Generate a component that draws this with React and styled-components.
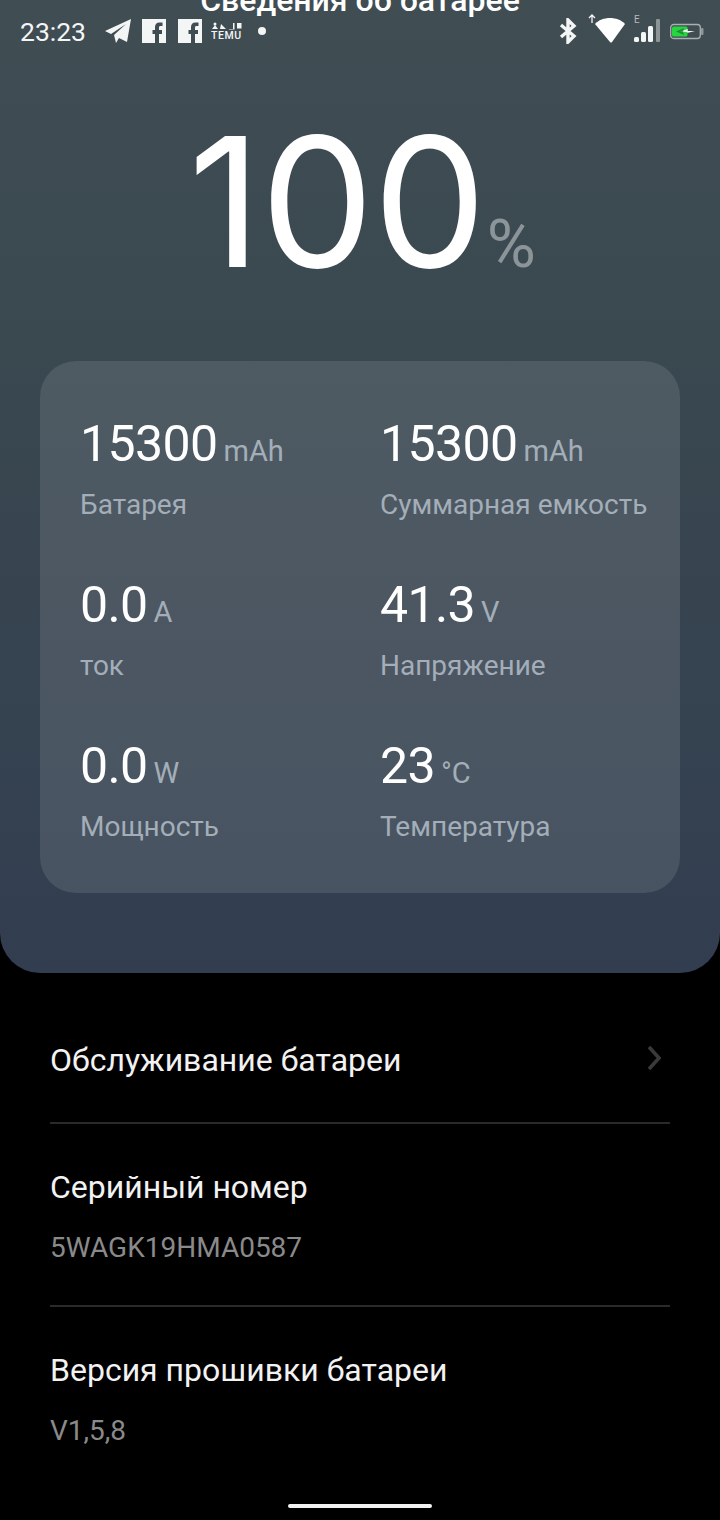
import React from 'react';
import styled, { createGlobalStyle } from 'styled-components';

const GlobalStyle = createGlobalStyle`
  html, body { margin: 0; padding: 0; background: #000; }
  body { font-family: "Roboto", "Noto Sans", sans-serif; }
`;

const Screen = styled.div`
  position: relative;
  width: 720px;
  height: 1520px;
  overflow: hidden;
  background: #000;
  color: #fff;
`;

const StatusBar = styled.div`
  position: absolute;
  top: 14px;
  left: 20px;
  right: 16px;
  height: 34px;
  display: flex;
  align-items: center;
  justify-content: space-between;
`;

const StatusGroup = styled.div`
  display: flex;
  align-items: center;
`;

const Clock = styled.span`
  font-size: 26.5px;
  color: #f4f5f5;
  margin-right: 18px;
`;

const Hero = styled.section`
  height: 973px;
  box-sizing: border-box;
  padding: 0 40px;
  border-radius: 0 0 40px 40px;
  background: linear-gradient(180deg, #404d53 0%, #3a4850 35%, #323e50 100%);
  overflow: hidden;
`;

const Header = styled.header`
  position: relative;
  height: 16px;
  text-align: center;
`;

const Title = styled.h1`
  margin: -17px 0 0;
  font-size: 32px;
  line-height: 34px;
  font-weight: 500;
`;

const Back = styled.svg`
  position: absolute;
  left: 10px;
  top: 0;
`;

const Charge = styled.div`
  display: flex;
  align-items: baseline;
  justify-content: center;
  box-sizing: border-box;
  height: 345px;
  padding-top: 92px;
  margin-bottom: 17px;
  line-height: 222px;
`;

const ChargeValue = styled.span`
  font-family: "Inter", "Roboto", sans-serif;
  font-size: 180px;
  font-weight: 430;
  letter-spacing: -1px;
  margin-left: 4px;
`;

const ChargeUnit = styled.span`
  font-size: 67px;
  margin-left: 1px;
  color: #8b9599;
`;

const Card = styled.div`
  display: grid;
  grid-template-columns: 300px 1fr;
  grid-auto-rows: 161px;
  box-sizing: border-box;
  height: 532px;
  padding: 51px 0 0 40px;
  border-radius: 36px;
  background: rgba(255, 255, 255, 0.105);
`;

const Stat = styled.div`
  display: flex;
  flex-direction: column;
  gap: 9px;
`;

const StatValue = styled.div`
  display: flex;
  align-items: baseline;
  height: 64px;
  line-height: 64px;
  font-size: 50px;
  font-weight: 450;
  letter-spacing: -0.6px;
`;

const StatUnit = styled.span`
  font-size: 29px;
  font-weight: 400;
  letter-spacing: 0;
  margin-left: 6px;
  color: #a3aeb8;
`;

const StatLabel = styled.div`
  font-size: 28px;
  line-height: 40px;
  color: #a3aeb8;
  white-space: nowrap;
`;

const List = styled.div`
  padding: 0 50px;
`;

const Row = styled.div`
  display: flex;
  align-items: ${(p) => (p.$center ? 'center' : 'flex-start')};
  justify-content: space-between;
  box-sizing: border-box;
  height: ${(p) => p.$height}px;
  padding-top: ${(p) => p.$top}px;
  border-bottom: ${(p) => (p.$last ? 'none' : '2px solid #2a2a2a')};
`;

const RowTitle = styled.div`
  font-size: 32px;
  line-height: 40px;
  color: #f2f2f2;
`;

const RowValue = styled.div`
  margin-top: 21px;
  font-size: 28px;
  line-height: 40px;
  color: #8a8a8a;
`;

const Chevron = styled.svg`
  margin-right: 9px;
  margin-top: -4px;
`;

const HomeBar = styled.div`
  position: absolute;
  left: 288px;
  bottom: 12px;
  width: 144px;
  height: 4px;
  border-radius: 2px;
  background: #f2f2f2;
`;

const stats = [
  { value: '15300', unit: 'mAh', label: 'Батарея' },
  { value: '15300', unit: 'mAh', label: 'Суммарная емкость' },
  { value: '0.0', unit: 'A', label: 'ток' },
  { value: '41.3', unit: 'V', label: 'Напряжение' },
  { value: '0.0', unit: 'W', label: 'Мощность' },
  { value: '23', unit: '°C', label: 'Температура' },
];

const Telegram = () => (
  <svg width="28" height="26" viewBox="0 0 28 26" style={{ marginRight: 10 }}>
    <path d="M1 13 L27 1 L23 24 L15 20 L12 25 L10 17 L22 6 L7 16 Z" fill="#f4f5f5" />
  </svg>
);

const Facebook = ({ gap }) => (
  <svg width="24" height="24" viewBox="0 0 24 24" style={{ marginRight: gap }}>
    <path
      fillRule="evenodd"
      d="M0 0H24V24H17V15H20V11H17V8.500C17 7.500 17.500 7 18.500 7H20.500V3.500H17.500C14.500 3.500 13 5.500 13 8V11H10.500V15H13V24H0Z"
      fill="#f4f5f5"
    />
  </svg>
);

const Temu = () => (
  <svg width="31" height="22" viewBox="0 0 31 22" style={{ marginRight: 15 }}>
    <circle cx="4" cy="4" r="1.500" fill="#f4f5f5" />
    <path d="M1 9l3-4 3 4zM10 4l5 5h-6zM18 9h4V3h1.500v6.500h-5.500zM26 3h4.500v5.500h-4.500z" fill="#f4f5f5" />
    <text x="0" y="19" fontSize="10.500" fontWeight="500" fill="#f4f5f5" fontFamily="Roboto, sans-serif" textLength="30">TEMU</text>
  </svg>
);

const Dot = () => (
  <svg width="10" height="10" viewBox="0 0 10 10">
    <circle cx="5" cy="5" r="4" fill="#f4f5f5" />
  </svg>
);

const Bluetooth = () => (
  <svg width="18" height="26" viewBox="0 0 18 26" style={{ marginRight: 10 }}>
    <path
      d="M2 7 L15 18 L9 24 V2 L15 8 L2 19"
      fill="none"
      stroke="#f4f5f5"
      strokeWidth="3.400"
    />
  </svg>
);

const Wifi = () => (
  <svg width="40" height="34" viewBox="0 0 40 34" style={{ marginRight: 6 }}>
    <path d="M2 4 L5 1 L8 4 M5 1 V9" fill="none" stroke="#f4f5f5" strokeWidth="1.300" />
    <path d="M8 10 C15 2 31 2 38 10 L25 28 Q24 29 23 28 Z" fill="#fff" />
  </svg>
);

const Signal = () => (
  <svg width="28" height="34" viewBox="0 0 28 34" style={{ marginRight: 9 }}>
    <text x="1" y="9" fontSize="10" fill="#b5babc" fontFamily="Roboto, sans-serif">E</text>
    <rect x="1" y="23" width="5" height="5" rx="1.500" fill="#f4f5f5" />
    <rect x="8" y="18" width="5" height="10" rx="1.500" fill="#f4f5f5" />
    <rect x="15" y="12" width="5" height="16" rx="1.500" fill="#f4f5f5" />
    <rect x="23" y="5" width="4" height="23" rx="1" fill="#8d9497" />
  </svg>
);

const Battery = () => (
  <svg width="34" height="18" viewBox="0 0 34 18">
    <rect x="0.700" y="2.500" width="29.600" height="14" rx="3" fill="none" stroke="#a9b0b2" strokeWidth="1.300" />
    <rect x="2" y="4.500" width="15.500" height="10" rx="1.500" fill="#25d63f" />
    <rect x="31" y="6" width="2.500" height="7" rx="1" fill="#8f9698" />
    <path d="M10 9.500 L18 7 L17.500 9 L25 9 L17 11 L17.500 10 Z" fill="#f4f5f5" />
    <path d="M6 9.500 L14 6 L13 9.500 L14 13 Z" fill="#1f5f32" opacity="0.600" />
  </svg>
);

const App = () => (
  <Screen>
    <GlobalStyle />
    <Hero>
      <Header>
        <Back width="70" height="20" viewBox="0 0 70 20">
          <path d="M7 -6 L25 13" fill="none" stroke="#f4f5f5" strokeWidth="4" strokeLinecap="round" />
        </Back>
        <Title>Сведения об батарее</Title>
      </Header>
      <Charge>
        <ChargeValue>100</ChargeValue>
        <ChargeUnit>%</ChargeUnit>
      </Charge>
      <Card>
        {stats.map(({ value, unit, label }) => (
          <Stat key={label}>
            <StatValue>
              {value}
              <StatUnit>{unit}</StatUnit>
            </StatValue>
            <StatLabel>{label}</StatLabel>
          </Stat>
        ))}
      </Card>
    </Hero>
    <List>
      <Row $center $height={151} $top={24}>
        <RowTitle>Обслуживание батареи</RowTitle>
        <Chevron width="14" height="26" viewBox="0 0 14 26">
          <path d="M2 2 L12 13 L2 24" fill="none" stroke="#3a3a3c" strokeWidth="3.500" />
        </Chevron>
      </Row>
      <Row $height={183} $top={43}>
        <div>
          <RowTitle>Серийный номер</RowTitle>
          <RowValue>5WAGK19HMA0587</RowValue>
        </div>
      </Row>
      <Row $last $height={180} $top={43}>
        <div>
          <RowTitle>Версия прошивки батареи</RowTitle>
          <RowValue>V1,5,8</RowValue>
        </div>
      </Row>
    </List>
    <StatusBar>
      <StatusGroup>
        <Clock>23:23</Clock>
        <Telegram />
        <Facebook gap={12} />
        <Facebook gap={9} />
        <Temu />
        <Dot />
      </StatusGroup>
      <StatusGroup>
        <Bluetooth />
        <Wifi />
        <Signal />
        <Battery />
      </StatusGroup>
    </StatusBar>
    <HomeBar />
  </Screen>
);

export default App;
